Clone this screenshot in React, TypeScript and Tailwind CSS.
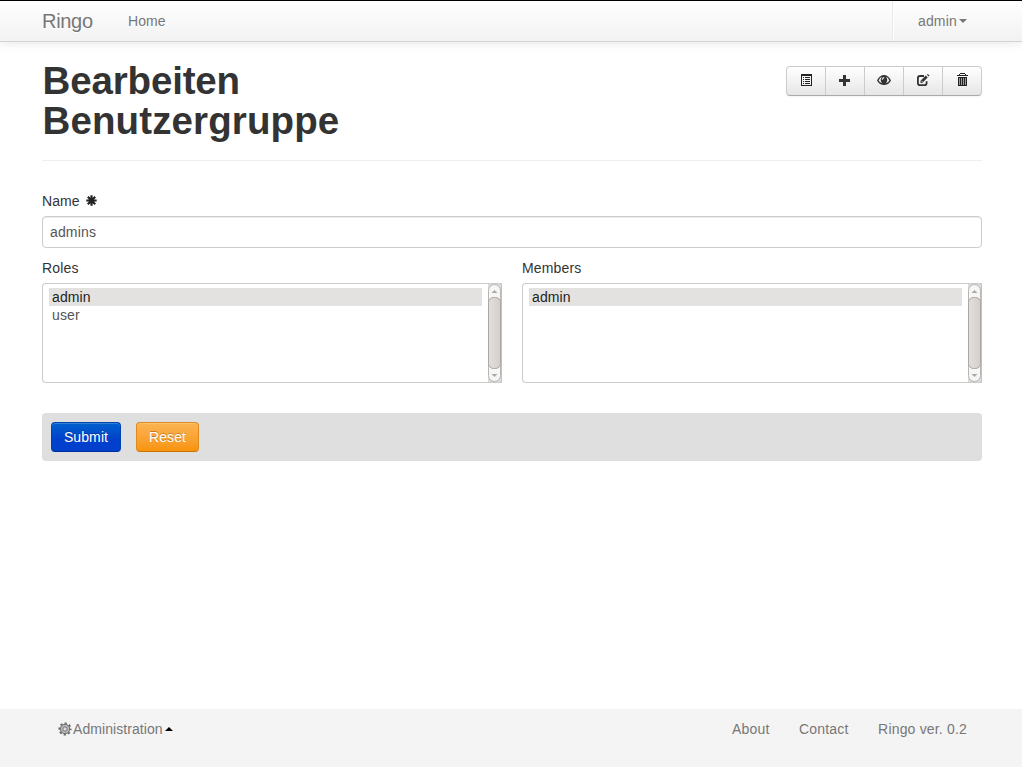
import React from "react";

function ListIcon() {
  return (
    <svg width="13" height="14" viewBox="0 0 13 14" shapeRendering="crispEdges" fill="#222">
      <path fillRule="evenodd" d="M1 1h11v12H1zM2 3v9h9V3z" />
      <path d="M3 4h1v1H3zM5 4h5v1H5zM3 6h1v1H3zM5 6h5v1H5zM3 8h1v1H3zM5 8h5v1H5zM3 10h1v1H3zM5 10h5v1H5z" />
    </svg>
  );
}

function PlusIcon() {
  return (
    <svg width="13" height="14" viewBox="0 0 13 14" className="-ml-[2px]" fill="#333">
      <path d="M5 2h3v4h4v3H8v4H5V9H1V6h4z" />
    </svg>
  );
}

function EyeIcon() {
  return (
    <svg width="14" height="14" viewBox="0 0 14 14">
      <path fill="#333" d="M0 7.500C1.500 4 4.300 2 7 2s5.500 2 7 5.500C12.500 10.700 9.700 12 7 12S1.500 10.700 0 7.500z" />
      <path fill="#eee" d="M1.600 7.500C2.500 5.600 3.600 4.400 5 3.800C3.300 5.500 3.300 8.500 5.200 10.200C3.700 9.800 2.500 8.900 1.600 7.500zM12.400 7.500C11.500 5.600 10.400 4.400 9 3.800C10.700 5.500 10.700 8.500 8.800 10.200C10.300 9.800 11.500 8.900 12.400 7.500z" />
      <path d="M5.300 6.700Q5.400 4.800 7.200 4.600" fill="none" stroke="#eee" strokeWidth="1.100" />
    </svg>
  );
}

function EditIcon() {
  return (
    <svg width="14" height="14" viewBox="0 0 14 14">
      <path d="M8 3H4Q1.900 3 1.900 5.200V9.900Q1.900 12.100 4 12.100H8.500Q10.600 12.100 10.600 9.900V8.300" fill="none" stroke="#333" strokeWidth="1.800" />
      <path fill="#333" d="M4.500 10V7.700L9.800 2.500l1.900 1.900L6.500 9.700zM10.900 1.800l.9-.9 1.700 1.700-.9.900z" />
      <path d="M5.300 7.700l1.300 1.300" stroke="#eee" strokeWidth=".8" />
    </svg>
  );
}

function TrashIcon() {
  return (
    <svg width="13" height="14" viewBox="0 0 13 14" shapeRendering="crispEdges">
      <path fill="#222" d="M4 0h5v1H4zM3 1h1v1H3zM9 1h1v1H9zM1 2h11v1H1zM2 4h9v9H2z" />
      <path fill="#999" d="M3 5h1v7H3zM5 5h1v7H5zM7 5h1v7H7zM9 5h1v7H9z" />
    </svg>
  );
}

function AsteriskIcon() {
  return (
    <svg width="11" height="11" viewBox="0 0 11 11">
      <path d="M5.500 .3v10.400M.3 5.500h10.400M1.800 1.800l7.400 7.400M9.200 1.800L1.800 9.200" stroke="#222" strokeWidth="2.200" />
    </svg>
  );
}

function CogIcon() {
  return (
    <svg width="14" height="14" viewBox="0 0 14 14" fill="none">
      <circle cx="7" cy="7" r="5.700" stroke="#666" strokeWidth="1.700" strokeDasharray="2.240 2.240" strokeDashoffset="1.120" />
      <circle cx="7" cy="7" r="4.700" fill="#b4b4b4" stroke="#6a6a6a" />
      <circle cx="7" cy="7" r="3.300" stroke="#c4c4c4" strokeWidth=".8" />
      <rect x="5" y="5" width="4" height="4" rx="1" fill="#ddd" stroke="#777" />
    </svg>
  );
}

function Scrollbar() {
  return (
    <svg width="14" height="98" viewBox="0 0 14 98" className="shrink-0">
      <defs>
        <linearGradient id="thumb">
          <stop offset="0" stopColor="#e2dfdd" />
          <stop offset="1" stopColor="#d3cfcc" />
        </linearGradient>
      </defs>
      <path fill="#dcd9d7" d="M0 0h14v98H0z" />
      <rect x=".5" y=".5" width="12" height="97" rx="6" fill="#f6f6f5" stroke="#b8b4b1" />
      <rect x=".5" y="13.500" width="12" height="71" rx="5" fill="url(#thumb)" stroke="#aaa6a3" />
      <path fill="#aaa" d="M3.500 9h6l-3-3zM3.500 90h6l-3 3z" />
    </svg>
  );
}

function SelectList({ label, options }: { label: string; options: string[] }) {
  return (
    <div className="w-[460px]">
      <div className="mb-[5px] h-5 tracking-[0.15px]">{label}</div>
      <div className="flex h-[100px] overflow-hidden rounded-l-[4px] border border-[#ccc] border-r-[#c4c1bf]">
        <div className="flex-1 pt-1 pr-[6px] pl-[6px]">
          {options.map((o, i) => (
            <div key={o} className={i === 0 ? "h-[18px] bg-[#e4e2e0] pl-[3px] leading-[18px] tracking-[0.12px] text-[#222]" : "h-[18px] pl-[3px] leading-[18px] tracking-[0.12px] text-[#555]"}>
              {o}
            </div>
          ))}
        </div>
        <div className="-mr-px"><Scrollbar /></div>
      </div>
    </div>
  );
}

const actions = [ListIcon, PlusIcon, EyeIcon, EditIcon, TrashIcon];

export default function App() {
  return (
    <div className="flex h-[767px] w-[1022px] flex-col overflow-hidden bg-white font-['Liberation_Sans',Arial,sans-serif] text-[14px] leading-5 text-[#333]">
      <nav className="flex h-[42px] shrink-0 justify-between border-t border-b border-t-black border-b-[#d4d4d4] bg-gradient-to-b from-white to-[#f2f2f2] pr-10 pl-[42px] text-[#777] shadow-[0_1px_10px_rgba(0,0,0,0.1)]">
        <div className="flex pt-[10px]">
          <a className="w-[86px] text-[20px] tracking-[-0.3px] [text-shadow:0_1px_0_#fff]">Ringo</a>
          <a className="tracking-[0.1px] [text-shadow:0_1px_0_#fff]">Home</a>
        </div>
        <div className="flex w-[90px] items-start border-l border-[#eaeaea] pt-[10px] pl-[25px] shadow-[inset_1px_0_0_#fff]">
          <span className="tracking-[0.15px]">admin</span>
          <svg width="8" height="4" viewBox="0 0 8 4" className="mt-2 ml-[2px]" fill="#777"><path d="M0 0h8L4 4z" /></svg>
        </div>
      </nav>

      <main className="flex-1 pr-10 pl-[42px]">
        <header className="flex h-[119px] items-start justify-between border-b border-[#eee] pt-[19px]">
          <h1 className="w-[460px] pl-[0.500px] text-[38.5px] leading-10 font-bold">
            <span className="tracking-[-0.15px]">Bearbeiten</span>
            <br />
            <span className="tracking-[0.12px]">Benutzergruppe</span>
          </h1>
          <div className="mt-[5px] flex h-[30px] rounded-[4px] border border-[#ccc] border-b-[#aaa] bg-gradient-to-b from-white to-[#e6e6e6] shadow-[0_1px_2px_rgba(0,0,0,0.05)]">
            {actions.map((Icon, i) => (
              <button key={i} className={i === 0 ? "flex w-[38px] justify-center pt-[6px]" : "flex w-[39px] justify-center border-l border-[#ccc] pt-[6px]"}>
                <Icon />
              </button>
            ))}
          </div>
        </header>

        <form className="pt-[30px]" onSubmit={(e) => e.preventDefault()}>
          <label className="mb-[5px] flex h-5">
            <span className="tracking-[0.1px]">Name</span>
            <span className="mt-[4px] ml-[6px]"><AsteriskIcon /></span>
          </label>
          <input defaultValue="admins" className="mb-[10px] block h-8 w-full rounded-[4px] border border-[#ccc] px-[7px] tracking-[0.15px] text-[#555] shadow-[inset_0_1px_1px_rgba(0,0,0,0.075)]" />
          <div className="mb-[30px] flex gap-5">
            <SelectList label="Roles" options={["admin", "user"]} />
            <SelectList label="Members" options={["admin"]} />
          </div>
          <div className="flex h-12 gap-[15px] rounded-[4px] bg-[#dfdfdf] pt-[9px] pl-[9px] text-white">
            <button type="submit" className="h-[30px] w-[70px] rounded-[4px] border border-[#0044b3] border-b-[#003399] bg-gradient-to-b from-[#0060cc] to-[#0040cc] to-60% tracking-[0.1px] shadow-[inset_0_1px_0_rgba(255,255,255,0.2)] [text-shadow:0_-1px_0_rgba(0,0,0,0.25)]">Submit</button>
            <button type="reset" className="h-[30px] w-[63px] rounded-[4px] border border-[#de8a1c] border-b-[#c67605] bg-gradient-to-b from-[#fbb450] to-[#f89406] tracking-[0.1px] shadow-[inset_0_1px_0_rgba(255,255,255,0.2)] [text-shadow:0_-1px_0_rgba(0,0,0,0.25)]">Reset</button>
          </div>
        </form>
      </main>

      <footer className="flex h-[58px] shrink-0 justify-between bg-[#f4f4f4] pt-[10px] pr-[55px] pl-[58px] text-[#777]">
        <div className="flex">
          <span className="mt-[3px] mr-px"><CogIcon /></span>
          <span className="tracking-[0.07px]">Administration</span>
          <svg width="8" height="4" viewBox="0 0 8 4" className="mt-[8px] ml-[2px]" fill="#000"><path d="M0 4h8L4 0z" /></svg>
        </div>
        <div className="flex gap-[29.500px] tracking-[0.18px]">
          <a>About</a>
          <a>Contact</a>
          <a>Ringo ver. 0.2</a>
        </div>
      </footer>
    </div>
  );
}
